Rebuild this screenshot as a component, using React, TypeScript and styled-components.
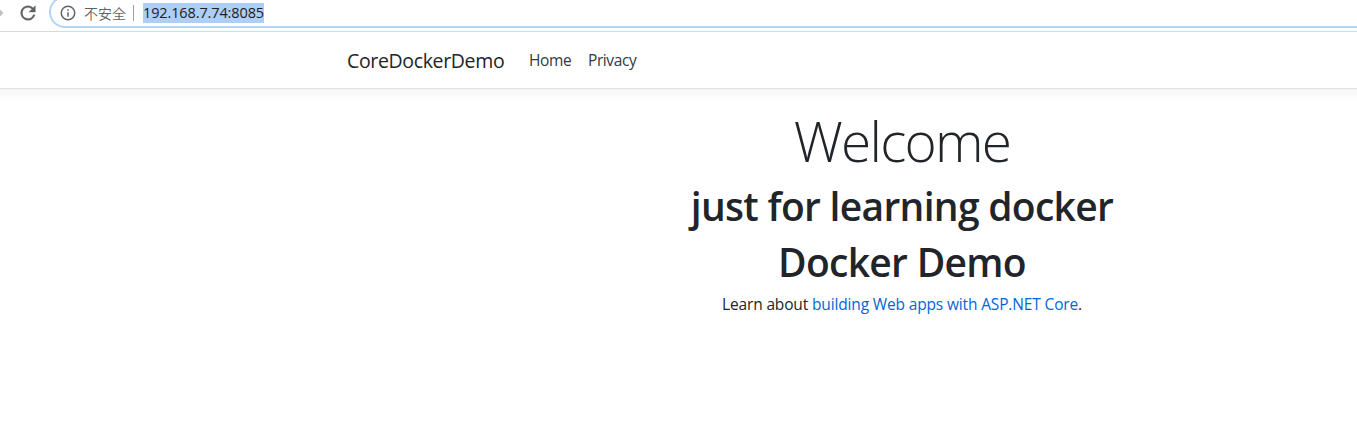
import React from 'react';
import styled, { createGlobalStyle } from 'styled-components';

const GlobalStyle = createGlobalStyle`
  * { box-sizing: border-box; }
  html, body { margin: 0; padding: 0; background: #fff; overflow: hidden; }
  body {
    font-family: "Open Sans", "Noto Sans", "Noto Sans CJK SC", sans-serif;
    font-size: 16px;
    line-height: 1.5;
    color: #212529;
  }
`;

const Page = styled.div`
  height: 423px;
  overflow: hidden;
`;

const BrowserBar = styled.div`
  display: flex;
  align-items: flex-start;
  height: 32px;
  overflow: hidden;
  border-bottom: 1px solid #dadce0;
`;

const Forward = styled.svg`
  flex: none;
  width: 4px;
  height: 26px;
`;

const Reload = styled.svg`
  flex: none;
  width: 22px;
  height: 22px;
  margin: 2px 10px 0 13px;
`;

const AddressBar = styled.div`
  display: flex;
  align-items: center;
  flex: 1;
  height: 32px;
  margin: -4px -30px 0 0;
  padding-left: 8px;
  border: 2px solid #b3d3f9;
  border-radius: 16px;
`;

const InfoIcon = styled.svg`
  flex: none;
  width: 18px;
  height: 18px;
  margin-top: 2px;
`;

const SecurityLabel = styled.span`
  margin: 1px 0 0 7px;
  padding-right: 7px;
  border-right: 1px solid #9aa0a6;
  font-family: "Noto Sans CJK SC", sans-serif;
  font-size: 14px;
  font-weight: 350;
  line-height: 16px;
  color: #5f6368;
`;

const Address = styled.span`
  margin: 1px 0 0 9px;
  font-size: 14.5px;
  line-height: 20px;
  letter-spacing: -0.12px;
  color: #202124;
  background: #accef7;
`;

const Header = styled.header`
  height: 57px;
  margin: 0 -20px;
  padding: 0 20px;
  border-bottom: 1px solid #dee2e6;
  box-shadow: 0 4px 12px rgba(0, 0, 0, 0.05);
`;

const Container = styled.div`
  width: 1140px;
  margin-left: 332px;
  padding: 0 15px;
`;

const Nav = styled(Container)`
  display: flex;
  align-items: center;
  height: 56px;
`;

const Brand = styled.a`
  width: 157px;
  margin-right: 25px;
  padding-top: 2px;
  font-size: 19.5px;
  line-height: 30px;
  letter-spacing: -0.35px;
  white-space: nowrap;
`;

const NavLink = styled.a<{ $width: number }>`
  width: ${p => p.$width}px;
  margin-right: 16px;
  padding-top: 1px;
  font-size: 15.5px;
  letter-spacing: -0.4px;
  color: #343a40;
  white-space: nowrap;
`;

const Main = styled(Container)`
  padding-top: 18px;
  text-align: center;
`;

const Display = styled.h1`
  margin: 0 0 8px;
  font-size: 55px;
  font-weight: 300;
  line-height: 67px;
  letter-spacing: -1.8px;
`;

const Heading = styled.h1`
  margin: 0 0 8px;
  font-size: 39px;
  font-weight: 600;
  line-height: 48px;
  letter-spacing: -0.7px;
`;

const Lead = styled.p`
  margin: -1px 0 0;
  font-size: 15.5px;
  letter-spacing: -0.15px;
`;

const TextLink = styled.a`
  color: #0366d6;
`;

export default function App() {
  return (
    <Page>
      <GlobalStyle />
      <BrowserBar>
        <Forward viewBox="0 0 4 26">
          <path d="M0 9.5 3.5 13 0 16.5z" fill="#bdc1c6" />
        </Forward>
        <Reload viewBox="0 0 24 24">
          <path
            fill="#5f6368"
            stroke="#5f6368"
            strokeWidth="0.4"
            d="M17.65 6.35A7.96 7.96 0 0 0 12 4a8 8 0 1 0 7.73 10h-2.08A6 6 0 1 1 12 6c1.66 0 3.14.69 4.22 1.78L13 11h7V4z"
          />
        </Reload>
        <AddressBar>
          <InfoIcon viewBox="0 0 24 24" fill="#5f6368">
            <path d="M11 17h2v-6h-2zm1-15a10 10 0 1 0 0 20 10 10 0 0 0 0-20m0 18a8 8 0 1 1 0-16 8 8 0 0 1 0 16M11 9h2V7h-2z" />
          </InfoIcon>
          <SecurityLabel>不安全</SecurityLabel>
          <Address>192.168.7.74:8085</Address>
        </AddressBar>
      </BrowserBar>
      <Header>
        <Nav as="nav">
          <Brand>CoreDockerDemo</Brand>
          <NavLink $width={43}>Home</NavLink>
          <NavLink $width={49}>Privacy</NavLink>
        </Nav>
      </Header>
      <Main as="main">
        <Display>Welcome</Display>
        <Heading>just for learning docker</Heading>
        <Heading>Docker Demo</Heading>
        <Lead>
          Learn about <TextLink>building Web apps with ASP.NET Core</TextLink>.
        </Lead>
      </Main>
    </Page>
  );
}
